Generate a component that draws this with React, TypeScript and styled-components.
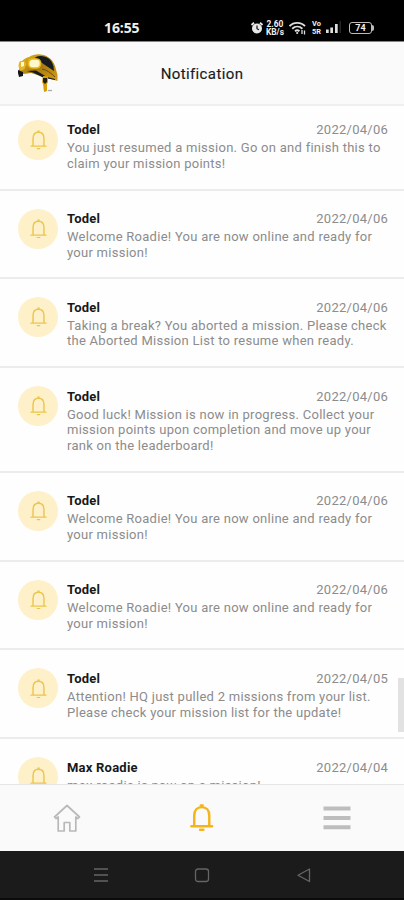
import React from "react";
import styled, { createGlobalStyle } from "styled-components";

const GlobalStyle = createGlobalStyle`
  * { box-sizing: border-box; }
  body { margin: 0; background: #fff; font-family: Roboto, "Liberation Sans", sans-serif; }
`;

const Screen = styled.div`
  width: 404px;
  height: 900px;
  display: flex;
  flex-direction: column;
  overflow: hidden;
  background: #fefefe;
`;

const StatusBar = styled.div`
  height: 42px;
  flex: none;
  display: flex;
  align-items: center;
  padding: 14px 28px 0 104px;
  background: #000;
  border-bottom: 1px solid #858585;
  color: #f0f0f0;
`;

const Clock = styled.span`
  font: 700 14px/16px "Open Sans", sans-serif;
  letter-spacing: -0.1px;
  width: 146px;
`;

const StatusIcons = styled.div`
  display: flex;
  align-items: center;
  svg { display: block; flex: none; }
`;

const NetSpeed = styled.div<{ $size: number; $width: number; $gap: number }>`
  width: ${(p) => p.$width}px;
  margin-right: ${(p) => p.$gap}px;
  font: 700 ${(p) => p.$size}px/8px Roboto, sans-serif;
  text-align: center;
  white-space: nowrap;
  display: flex;
  flex-direction: column;
  align-items: center;
`;

const Battery = styled.div`
  width: 23px;
  height: 12px;
  margin-left: 8px;
  border: 1.5px solid #bdbdbd;
  border-radius: 3px;
  font: 700 9px/10px Roboto, sans-serif;
  text-align: center;
`;

const BatteryTip = styled.div`
  width: 2px;
  height: 6px;
  background: #bdbdbd;
  border-radius: 0 2px 2px 0;
`;

const Header = styled.header`
  height: 64px;
  flex: none;
  display: grid;
  grid-template-columns: 67px 1fr 67px;
  align-items: center;
  background: #fafafa;
  border-bottom: 2px solid #efefef;
`;

const Logo = styled.svg`
  margin: 0 0 1px 17px;
  display: block;
`;

const Title = styled.h1`
  margin: 2px 0 0;
  font-size: 15px;
  font-weight: 400;
  letter-spacing: 0.38px;
  color: #1a1a1a;
  text-align: center;
  -webkit-text-stroke: 0.15px #1a1a1a;
`;

const Viewport = styled.main`
  flex: 1;
  min-height: 0;
  overflow: hidden;
  position: relative;
`;

const List = styled.div`
  margin-top: -4.4px;
`;

const Row = styled.article<{ $tall: boolean }>`
  height: ${(p) => (p.$tall ? 104.4 : 88.9)}px;
  display: flex;
  padding: 18px 16px 0 18px;
  border-bottom: 2px solid #ececec;
`;

const Badge = styled.div`
  width: 40px;
  height: 40px;
  margin-right: 9px;
  flex: none;
  display: flex;
  align-items: center;
  justify-content: center;
  border-radius: 50%;
  background: #fef0c9;
`;

const Body = styled.div`
  flex: 1;
  min-width: 0;
  padding-top: 2.3px;
`;

const Top = styled.div`
  display: flex;
  justify-content: space-between;
  line-height: 16px;
  margin-bottom: 2px;
`;

const Name = styled.span`
  font-size: 13px;
  font-weight: 700;
  letter-spacing: 0.22px;
  color: #181818;
`;

const DateText = styled.time`
  font-size: 13px;
  letter-spacing: 0.25px;
  color: #8c8c8c;
`;

const Message = styled.p`
  margin: 0;
  font-size: 13px;
  line-height: 15.8px;
  letter-spacing: 0.27px;
  color: #8c8c8c;
  white-space: pre;
`;

const ScrollThumb = styled.div`
  position: absolute;
  right: 0;
  top: 572px;
  width: 6px;
  height: 54px;
  background: #e2e2e2;
`;

const TabBar = styled.nav`
  height: 67px;
  flex: none;
  display: grid;
  grid-template-columns: repeat(3, 1fr);
  place-items: center;
  background: #fafafa;
  border-top: 1px solid #e6e6e6;
`;

const SystemNav = styled.div`
  height: 49px;
  flex: none;
  display: grid;
  grid-template-columns: repeat(3, 101px);
  justify-content: center;
  place-items: center;
  background: #1b1b1b;
  border-bottom: 2px solid #0b0b0b;
`;

const BellIcon = ({ width, color, weight }: { width: number; color: string; weight: number }) => (
  <svg width={width} height={(width * 28) / 24} viewBox="0 0 24 28" fill="none" stroke={color} strokeWidth={weight} strokeLinejoin="round">
    <path d="M1.500 22.800h21" strokeLinecap="round" />
    <path d="M4.300 22.500V12C4.300 6.500 7.300 3.200 12 3.200s7.700 3.300 7.700 8.800v10.500" />
    <path d="M11 1.600h2M10.300 26.300h3.400" strokeLinecap="round" />
  </svg>
);

const items = [
  { name: "Todel", date: "2022/04/06", text: "You just resumed a mission. Go on and finish this to\nclaim your mission points!" },
  { name: "Todel", date: "2022/04/06", text: "Welcome Roadie! You are now online and ready for\nyour mission!" },
  { name: "Todel", date: "2022/04/06", text: "Taking a break? You aborted a mission. Please check\nthe Aborted Mission List to resume when ready." },
  { name: "Todel", date: "2022/04/06", text: "Good luck! Mission is now in progress. Collect your\nmission points upon completion and move up your\nrank on the leaderboard!" },
  { name: "Todel", date: "2022/04/06", text: "Welcome Roadie! You are now online and ready for\nyour mission!" },
  { name: "Todel", date: "2022/04/06", text: "Welcome Roadie! You are now online and ready for\nyour mission!" },
  { name: "Todel", date: "2022/04/05", text: "Attention! HQ just pulled 2 missions from your list.\nPlease check your mission list for the update!" },
  { name: "Max Roadie", date: "2022/04/04", text: "max roadie is now on a mission!" },
];

export default function App() {
  return (
    <>
      <GlobalStyle />
      <Screen>
        <StatusBar>
          <Clock>16:55</Clock>
          <StatusIcons>
            <svg width="16" height="14" viewBox="0 0 16 14">
              <circle cx="7" cy="7.500" r="5" fill="#e8e8e8" />
              <path d="M1.500 4 4 1.800M12.500 4 10 1.800" stroke="#e8e8e8" strokeWidth="1.800" />
              <path d="M7 4.500v3.200l2 1" stroke="#111" strokeWidth="1.200" fill="none" />
            </svg>
            <NetSpeed $size={8.4} $width={18} $gap={5}>
              <span>2.60</span>
              <span>KB/s</span>
            </NetSpeed>
            <svg width="23" height="14" viewBox="0 0 23 14" fill="none" stroke="#dedede">
              <path d="M.5 5.200c4-4.500 11.500-4.500 15.500 0M3.200 7.800c3-2.900 7.200-2.900 10.200 0M6 10.200c1.400-1.300 3-1.300 4.400 0" strokeWidth="1.900" />
              <circle cx="8.200" cy="12" r="1.100" fill="#dedede" stroke="none" />
              <path d="M13 9v4M15.500 9.500v4" strokeWidth="1.300" />
            </svg>
            <NetSpeed $size={7.4} $width={9} $gap={5}>
              <span>Vo</span>
              <span>5R</span>
            </NetSpeed>
            <svg width="15" height="13" viewBox="0 0 15 13">
              <path d="M0 8.500h2.700V12H0zM4.300 6.500H7V12H4.300zM9 3h2.700v9H9z" fill="#dedede" />
              <path d="M13.500 0H15v12h-1.500z" fill="#262626" />
            </svg>
            <Battery>74</Battery>
            <BatteryTip />
          </StatusIcons>
        </StatusBar>
        <Header>
          <Logo width="44" height="42" viewBox="0 0 44 42">
            <defs>
              <linearGradient id="gold" x1="0" y1="0" x2="1" y2="1">
                <stop offset="0" stopColor="#edbd21" />
                <stop offset=".5" stopColor="#a77b14" />
                <stop offset="1" stopColor="#d69e13" />
              </linearGradient>
            </defs>
            <path d="M2 20C2 11 5 7 12 5C20-.5 34 2 38 14l2.500 9v6L27 25 14 21l-8 1-4-1z" fill="url(#gold)" />
            <path d="M18 5.500c7-3.500 16-.5 18.500 9l.5 4.500-12-8z" fill="#171c20" />
            <path d="M10 19l9-.5 11 6.500 8 2v1l-12-2.500-10-5z" fill="#171c20" />
            <path d="M25 17c5 1 9 4 13 8" fill="none" stroke="#6b4e12" strokeWidth="1" />
            <path d="M3 9h4.500l2 3-2 5-4 2C1 15 1 12 3 9z" fill="#e5b62a" />
            <path d="M4 10h3v4l-3 1z" fill="#fff8c9" />
            <rect x="11.500" y="7" width="12" height="9" rx="4" fill="#fff8cf" stroke="#ebb812" strokeWidth="1.700" />
            <path d="m1 18 5 2v4l-4 1-1-4z" fill="#141414" />
            <path d="M26 24h5v6l-1 2v7l-3 1-1-8-1-2z" fill="#d89e08" />
            <path d="M26 26h4v4l-2 2-2-2z" fill="#211e17" />
            <path d="M31 38.500h4" stroke="#aaa" strokeWidth="1.300" />
          </Logo>
          <Title>Notification</Title>
        </Header>
        <Viewport>
          <List>
            {items.map((item, i) => (
              <Row key={i} $tall={item.text.split("\n").length > 2}>
                <Badge>
                  <BellIcon width={17} color="#ecc54a" weight={2} />
                </Badge>
                <Body>
                  <Top>
                    <Name>{item.name}</Name>
                    <DateText>{item.date}</DateText>
                  </Top>
                  <Message>{item.text}</Message>
                </Body>
              </Row>
            ))}
          </List>
          <ScrollThumb />
        </Viewport>
        <TabBar>
          <svg width="28" height="28" viewBox="0 0 28 28" fill="none" stroke="#b9b9b9" strokeWidth="1.700" strokeLinejoin="round">
            <path d="M14 1.500 1.500 13l1.500 1.500 2.200-1.500v14h6v-8.500h5.600V27h6V13l2.200 1.500 1.500-1.500z" />
          </svg>
          <BellIcon width={23.500} color="#f3b51a" weight={2.500} />
          <svg width="28" height="28" viewBox="0 0 28 28" stroke="#bdbdbd" strokeWidth="4">
            <path d="M.5 4.500h27M.5 14h27M.5 23.300h27" />
          </svg>
        </TabBar>
        <SystemNav>
          <svg width="16" height="16" viewBox="0 0 16 16" stroke="#656565" strokeWidth="1.300">
            <path d="M1 2h14M1 8h14M1 14h14" />
          </svg>
          <svg width="16" height="16" viewBox="0 0 16 16" fill="none" stroke="#656565" strokeWidth="1.300">
            <rect x="1.500" y="2" width="13" height="12.500" rx="2.500" />
          </svg>
          <svg width="16" height="16" viewBox="0 0 16 16" fill="none" stroke="#656565" strokeWidth="1.300" strokeLinejoin="round">
            <path d="M14.500 2v12.500L3 8.200z" />
          </svg>
        </SystemNav>
      </Screen>
    </>
  );
}
